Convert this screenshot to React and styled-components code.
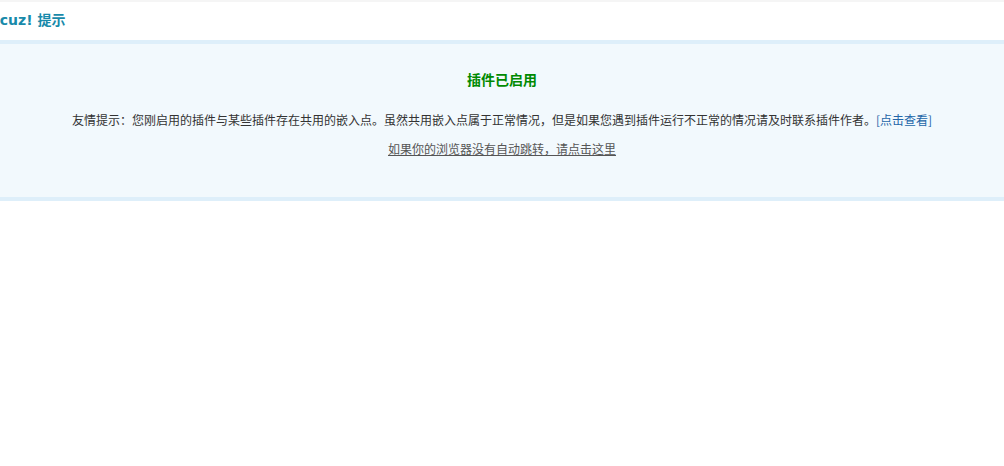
import React from "react";
import styled, { createGlobalStyle } from "styled-components";

const GlobalStyle = createGlobalStyle`
  html, body {
    margin: 0;
    padding: 0;
    background: #fff;
    overflow: hidden;
  }
  body {
    font: 12px "DejaVu Sans", "Noto Sans CJK SC", sans-serif;
    color: #333;
  }
`;

const Page = styled.div`
  width: 1004px;
  height: 466px;
  border-top: 2px solid #f5f5f5;
  box-sizing: border-box;
  overflow: hidden;
`;

const Header = styled.div`
  height: 38px;
  box-sizing: border-box;
  padding-bottom: 4px;
  display: flex;
  align-items: center;
`;

const Heading = styled.h3`
  margin: 0 0 0 -25px;
  font: bold 14px "DejaVu Sans", "Noto Sans CJK SC", sans-serif;
  color: #188aaa;
  white-space: nowrap;
`;

const InfoBox = styled.div`
  border-top: 4px solid #deeffa;
  border-bottom: 4px solid #deeffa;
  background: #f2f9fd;
  padding: 25px 0 38px;
  text-align: center;
`;

const InfoTitle = styled.h4`
  margin: 0 0 21px;
  font: bold 14px/20px "Noto Sans CJK SC", sans-serif;
  color: #008a00;
`;

const Line = styled.p`
  margin: 0 0 ${(p) => p.$gap || 0}px;
  font: 12px/20px "Noto Sans CJK SC", sans-serif;
  color: #333;
  white-space: nowrap;
`;

const Link = styled.a`
  color: ${(p) => (p.$muted ? "#555" : "#2366a8")};
  text-decoration: ${(p) => (p.$muted ? "underline" : "none")};
  cursor: pointer;
`;

export default function App() {
  return (
    <>
      <GlobalStyle />
      <Page>
        <Header>
          <Heading>Discuz! 提示</Heading>
        </Header>
        <InfoBox>
          <InfoTitle>插件已启用</InfoTitle>
          <Line $gap={9}>
            友情提示：您刚启用的插件与某些插件存在共用的嵌入点。虽然共用嵌入点属于正常情况，但是如果您遇到插件运行不正常的情况请及时联系插件作者。
            <Link>[点击查看]</Link>
          </Line>
          <Line>
            <Link $muted>如果你的浏览器没有自动跳转，请点击这里</Link>
          </Line>
        </InfoBox>
      </Page>
    </>
  );
}
